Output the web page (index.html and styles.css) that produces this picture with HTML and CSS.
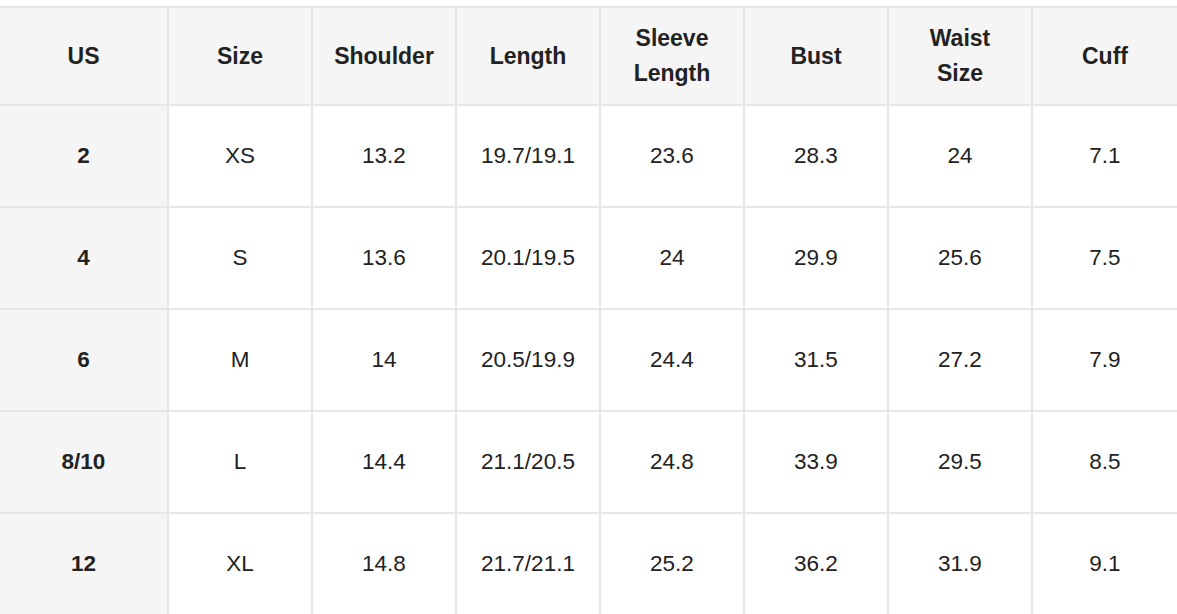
FILE: index.html
```html
<!DOCTYPE html>
<html lang="en">
<head>
<meta charset="utf-8">
<title>Size Chart</title>
<link rel="stylesheet" href="styles.css">
</head>
<body>
<table class="size-table">
  <colgroup>
    <col class="col-first">
    <col class="col-std">
    <col class="col-std">
    <col class="col-std">
    <col class="col-std">
    <col class="col-std">
    <col class="col-std">
    <col class="col-last">
  </colgroup>
  <thead>
    <tr class="head-row">
      <th>US</th>
      <th>Size</th>
      <th>Shoulder</th>
      <th>Length</th>
      <th>Sleeve<br>Length</th>
      <th>Bust</th>
      <th>Waist<br>Size</th>
      <th>Cuff</th>
    </tr>
  </thead>
  <tbody>
    <tr class="body-row">
      <th>2</th><td>XS</td><td>13.2</td><td>19.7/19.1</td><td>23.6</td><td>28.3</td><td>24</td><td>7.1</td>
    </tr>
    <tr class="body-row">
      <th>4</th><td>S</td><td>13.6</td><td>20.1/19.5</td><td>24</td><td>29.9</td><td>25.6</td><td>7.5</td>
    </tr>
    <tr class="body-row">
      <th>6</th><td>M</td><td>14</td><td>20.5/19.9</td><td>24.4</td><td>31.5</td><td>27.2</td><td>7.9</td>
    </tr>
    <tr class="body-row">
      <th>8/10</th><td>L</td><td>14.4</td><td>21.1/20.5</td><td>24.8</td><td>33.9</td><td>29.5</td><td>8.5</td>
    </tr>
    <tr class="body-row">
      <th>12</th><td>XL</td><td>14.8</td><td>21.7/21.1</td><td>25.2</td><td>36.2</td><td>31.9</td><td>9.1</td>
    </tr>
  </tbody>
</table>
</body>
</html>
```
FILE: styles.css
```css
html, body {
  margin: 0;
  padding: 0;
  overflow: hidden;
  background: #ffffff;
}

body {
  font-family: "Liberation Sans", Arial, Helvetica, sans-serif;
  color: #222222;
}

.size-table {
  table-layout: fixed;
  border-collapse: separate;
  border-spacing: 2px;
  background: #e6e6e6;
  margin: 6px 0 0 -2px;
  width: 1181px;
}

.col-first { width: 167px; }
.col-std { width: 142px; }
.col-last { width: 144px; }

.size-table th,
.size-table td {
  padding: 0;
  text-align: center;
  vertical-align: middle;
}

.head-row { height: 96px; }
.body-row { height: 100px; }

.head-row th {
  background: #f5f5f5;
  font-weight: bold;
  font-size: 23px;
  line-height: 35px;
}

.body-row th {
  background: #f5f5f5;
  font-weight: bold;
  font-size: 22.5px;
}

.body-row td {
  background: #ffffff;
  font-weight: normal;
  font-size: 22.5px;
}
```
